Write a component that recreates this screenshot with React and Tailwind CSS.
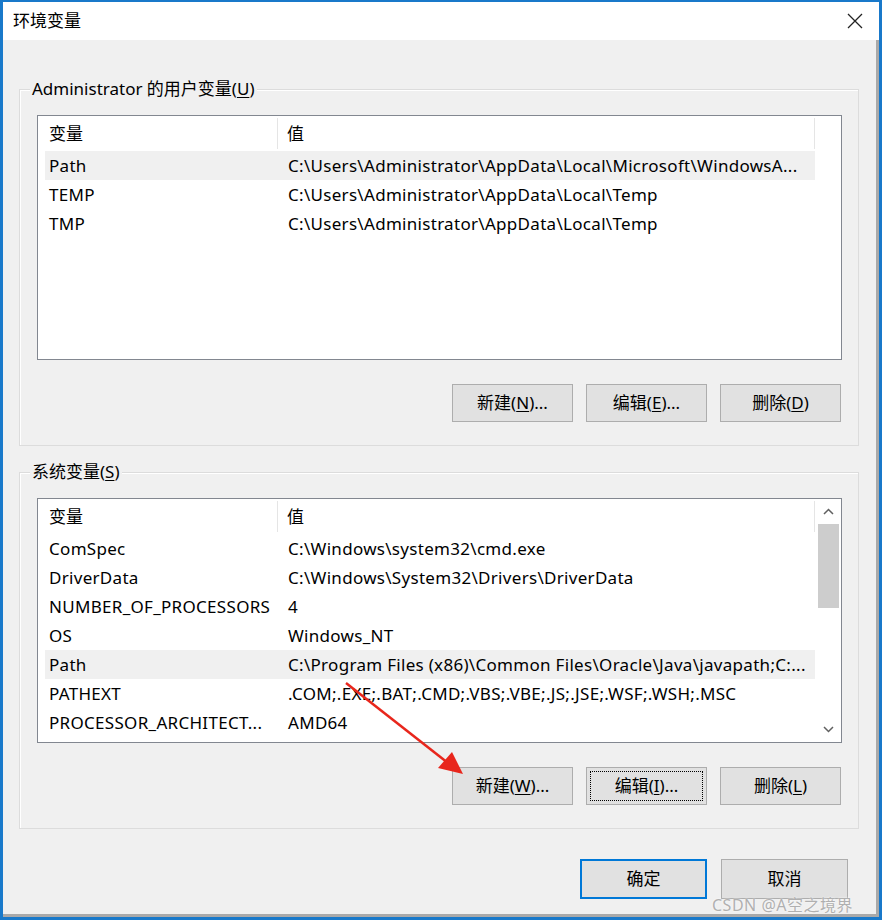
import React from 'react'

const FONT = { fontFamily: '"Noto Sans", "Noto Sans CJK SC", sans-serif' }

const userVars = [
  ['Path', 'C:\\Users\\Administrator\\AppData\\Local\\Microsoft\\WindowsA...', true],
  ['TEMP', 'C:\\Users\\Administrator\\AppData\\Local\\Temp'],
  ['TMP', 'C:\\Users\\Administrator\\AppData\\Local\\Temp'],
]

const sysVars = [
  ['ComSpec', 'C:\\Windows\\system32\\cmd.exe'],
  ['DriverData', 'C:\\Windows\\System32\\Drivers\\DriverData'],
  ['NUMBER_OF_PROCESSORS', '4'],
  ['OS', 'Windows_NT'],
  ['Path', 'C:\\Program Files (x86)\\Common Files\\Oracle\\Java\\javapath;C:...', true],
  ['PATHEXT', '.COM;.EXE;.BAT;.CMD;.VBS;.VBE;.JS;.JSE;.WSF;.WSH;.MSC'],
  ['PROCESSOR_ARCHITECT...', 'AMD64'],
]

function Btn({ label, u, rest, focus, primary, w = 'w-[121px]', h = 'h-[38px]' }) {
  return (
    <div className={`${w} ${h} flex items-center justify-center text-[17px] text-black bg-[#e1e1e1] ${primary ? 'border-2 border-[#0078d7]' : 'border border-[#adadad]'} relative`}>
      {focus && <div className="absolute inset-[3px] border border-dotted border-black" />}
      <span>
        {label}
        {u !== undefined && <>(<span className="underline underline-offset-2">{u}</span>){rest}</>}
      </span>
    </div>
  )
}

function Chevron({ up }) {
  return (
    <svg width="11" height="7" viewBox="0 0 11 7">
      <path d={up ? 'M1 6 L5.5 1.5 L10 6' : 'M1 1 L5.5 5.5 L10 1'} fill="none" stroke="#606060" strokeWidth="1.5" />
    </svg>
  )
}

function VarList({ rows, scroll }) {
  return (
    <div className="h-[245px] border border-[#828790] bg-white flex">
      <div className="flex-1 flex flex-col">
        <div className="h-[35px] flex items-stretch text-[17px] text-black">
          <div className="w-[240px] pl-[11px] flex items-center border-r border-[#e5e5e5] my-[2px]">变量</div>
          <div className="w-[537px] pl-[9px] flex items-center border-r border-[#e5e5e5] my-[2px]">值</div>
        </div>
        {rows.map(([k, v, hl]) => (
          <div key={k} className={`h-[29px] ml-[7px] w-[770px] flex items-center text-[17px] tracking-[0.3px] text-black whitespace-nowrap ${hl ? 'bg-[#f0f0f0]' : ''}`}>
            <div className="w-[233px] pl-[4px] shrink-0 overflow-hidden">{k}</div>
            <div className="pl-[10px] overflow-hidden">{v}</div>
          </div>
        ))}
      </div>
      {scroll && (
        <div className="w-[24px] flex flex-col items-stretch pl-[1px] pr-[2px]">
          <div className="h-[25px] flex items-center justify-center"><Chevron up /></div>
          <div className="flex-1 flex flex-col">
            <div className="h-[84px] bg-[#cdcdcd]" />
          </div>
          <div className="h-[25px] flex items-center justify-center"><Chevron /></div>
        </div>
      )}
    </div>
  )
}

function Group({ title, u, rows, scroll, btns }) {
  return (
    <div className="relative border border-[#dcdcdc] shadow-[inset_1px_1px_0_#ffffff] pt-[25px] pl-[17px] pr-[16px] pb-[23px]">
      <span className="absolute -top-[13px] left-[10px] px-[2px] bg-[#f0f0f0] text-[17px] leading-[24px] text-black">
        {title}(<span className="underline underline-offset-2">{u}</span>)
      </span>
      <VarList rows={rows} scroll={scroll} />
      <div className="flex justify-end gap-[13px] mt-[24px] pr-[1px]">
        {btns}
      </div>
    </div>
  )
}

export default function App() {
  return (
    <div className="w-[884px] h-[922px] bg-white relative" style={FONT}>
      <div className="w-[882px] h-[920px] border-l-[3px] border-t-2 border-r-[3px] border-b-[3px] border-[#1979ca] flex flex-col">
        <div className="h-[38px] shrink-0 bg-white flex items-center justify-between pl-[10px] pr-[16px]">
          <span className="text-[17px] text-black">环境变量</span>
          <svg width="16" height="16" viewBox="0 0 16 16">
            <path d="M1 1 L15 15 M15 1 L1 15" stroke="#222" strokeWidth="1.3" />
          </svg>
        </div>
        <div className="flex-1 bg-[#f0f0f0] border-r-[3px] border-b-[3px] border-[#a9a9a9] pl-[16px] pr-[17px] pt-[49px] flex flex-col">
          <Group
            title="Administrator 的用户变量"
            u="U"
            rows={userVars}
            btns={<>
              <Btn label="新建" u="N" rest="..." />
              <Btn label="编辑" u="E" rest="..." />
              <Btn label="删除" u="D" />
            </>}
          />
          <div className="h-[26px]" />
          <Group
            title="系统变量"
            u="S"
            rows={sysVars}
            scroll
            btns={<>
              <Btn label="新建" u="W" rest="..." />
              <Btn label="编辑" u="I" rest="..." focus />
              <Btn label="删除" u="L" />
            </>}
          />
          <div className="flex justify-end gap-[14px] mt-[30px] pr-[11px]">
            <Btn label="确定" primary w="w-[127px]" h="h-[40px]" />
            <Btn label="取消" w="w-[127px]" h="h-[40px]" />
          </div>
        </div>
      </div>

      <svg className="absolute left-0 top-0 pointer-events-none" width="884" height="922">
        <line x1="346" y1="683" x2="448" y2="763" stroke="#e8261c" strokeWidth="2.5" />
        <polygon points="463,774 438,768 452,752" fill="#e8261c" />
      </svg>

      <span className="absolute left-[712px] top-[893px] text-[16px] text-[#b0b0b0] tracking-[0.5px]" style={{ textShadow: '0 0 2px #fff' }}>
        CSDN @A空之境界
      </span>
    </div>
  )
}
